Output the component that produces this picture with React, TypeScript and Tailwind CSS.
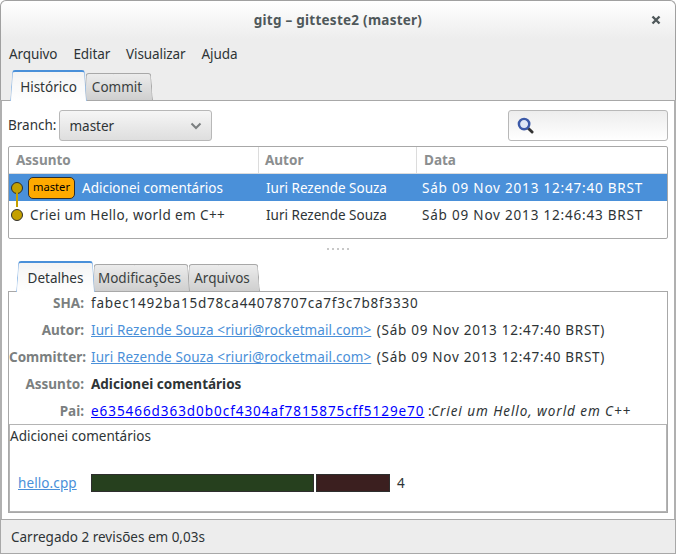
import React from 'react';

const font = { fontFamily: '"Noto Sans", sans-serif' };

// notebook tab: two skewed halves make the slanted sides, label sits on top
const Tab = ({ label, active, width, z }: { label: string; active?: boolean; width: string; z: string }) => {
  const face = active
    ? 'border-x border-t-2 border-x-[#9cc0e8] border-t-[#4a90d9] bg-gradient-to-b from-[#f4f4f4] to-white'
    : 'border-x border-t border-[#a8a8a8] bg-gradient-to-b from-[#ececec] to-[#cfcfcf]';
  return (
    <div
      className={`relative flex items-center justify-center ${width} ${z} ${
        active ? '-mb-px h-[31px] pt-[3px]' : '-ml-[3px] h-[27px] pr-[3px] pt-[1px] text-[#3a3f40]'
      }`}
    >
      <div className={`absolute bottom-0 left-0 top-0 w-[55%] origin-bottom -skew-x-[4deg] rounded-tl-[3px] border-r-0 ${face}`} />
      <div className={`absolute bottom-0 left-[45%] right-0 top-0 origin-bottom skew-x-[4deg] rounded-tr-[3px] border-l-0 ${face}`} />
      <span className="relative">{label}</span>
    </div>
  );
};

const Node = () => <div className="h-[12px] w-[12px] rounded-full border border-[#2e2e2e] bg-[#c4a000]" />;

const DetailRow = ({ label, children }: { label: string; children: React.ReactNode }) => (
  <div className="flex h-[27px] items-center pb-[4px]">
    <div className="w-[76px] pr-[1px] text-right font-bold text-[#7b7f80]">{label}</div>
    <div className="ml-[6px] whitespace-nowrap">{children}</div>
  </div>
);

const link = 'text-[#4a90d9] underline tracking-[0.1px]';

export default function App() {
  return (
    <div style={font} className="flex h-[554px] w-[676px] flex-col overflow-hidden bg-white text-[13.5px] text-[#2e3436]">
      {/* title bar and menu */}
      <div className="h-[100px] shrink-0 rounded-t-[6px] border border-b-0 border-[#a0a0a0] bg-[#ededed]">
        <div className="relative flex h-[38px] items-center justify-center rounded-t-[6px] bg-gradient-to-b from-white to-[#ededed] font-bold tracking-[0.25px] text-[#4f585a]">
          gitg – gitteste2 (master)
          <svg viewBox="0 0 10 10" className="absolute right-[14px] top-[14px] h-[10px] w-[10px]">
            <path d="M1.5 1.5 L8.5 8.5 M8.5 1.5 L1.5 8.5" stroke="#4f585a" strokeWidth="2.4" />
          </svg>
        </div>
        <div className="flex h-[30px] items-center gap-[16px] pl-[8px] tracking-[-0.1px]">
          <span>Arquivo</span>
          <span>Editar</span>
          <span>Visualizar</span>
          <span>Ajuda</span>
        </div>
        <div className="flex h-[31px] items-end pl-[9px]">
          <Tab label="Histórico" active width="w-[77px]" z="z-30" />
          <Tab label="Commit" width="w-[69px]" z="z-20" />
        </div>
      </div>

      {/* main content */}
      <div className="flex min-h-0 flex-1 flex-col border-x-2 border-t border-[#a8a8a8] border-x-[#b0b0b0] px-[6px]">
        <div className="mt-[9px] flex h-[31px] items-center justify-between">
          <div className="flex items-center gap-[3px]">
            <span>Branch:</span>
            <div className="flex h-[31px] w-[153px] items-center justify-between rounded-[3px] border border-[#b8b8b8] bg-gradient-to-b from-[#f6f6f6] to-[#dedede] px-[9px]">
              <span className="pt-[2px]">master</span>
              <svg viewBox="0 0 12 8" className="h-[8px] w-[12px]">
                <path d="M1.5 1.5 L6 6 L10.5 1.5" fill="none" stroke="#7b7f80" strokeWidth="2" />
              </svg>
            </div>
          </div>
          <div className="flex h-[31px] w-[160px] items-center rounded-[3px] border border-[#b8b8b8] bg-gradient-to-b from-[#ededed] to-white pl-[8px]">
            <svg viewBox="0 0 18 18" className="h-[17px] w-[17px]">
              <path d="M11 11 L16 16" stroke="#333" strokeWidth="3" strokeLinecap="round" />
              <circle cx="7.5" cy="7.5" r="5.5" fill="#dfe7f5" stroke="#3c5aa8" strokeWidth="2.6" />
            </svg>
          </div>
        </div>

        {/* commit list */}
        <div className="mt-[5px] h-[94px] rounded-[2px] border border-[#a8a8a8]">
          <div className="flex h-[27px] items-center border-b border-[#dcdcdc] font-bold text-[#8b8e8f]">
            <div className="h-full w-[250px] border-r border-[#dcdcdc] pl-[7px] leading-[27px]">Assunto</div>
            <div className="h-full w-[158px] border-r border-[#dcdcdc] pl-[6px] leading-[27px]">Autor</div>
            <div className="pl-[7px]">Data</div>
          </div>
          <div className="flex h-[27px] items-center bg-[#4a90d9] text-white">
            <div className="flex w-[250px] items-center">
              <div className="ml-[2px]"><Node /></div>
              <div className="ml-[5px] flex h-[22px] w-[47px] items-center justify-center rounded-[5px] border border-[#2e2e2e] bg-[#ffaa00] text-[11.2px] text-black">
                master
              </div>
              <span className="ml-[7px] pt-[2px]">Adicionei comentários</span>
            </div>
            <div className="w-[158px] pl-[7px] pt-[2px]">Iuri Rezende Souza</div>
            <div className="whitespace-nowrap pl-[5px] pt-[2px] tracking-[0.8px]">Sáb 09 Nov 2013 12:47:40 BRST</div>
          </div>
          <div className="relative flex h-[27px] items-center">
            <div className="absolute left-[7px] top-[-12px] h-[18px] w-[2px] bg-[#c4a000]" />
            <div className="relative flex w-[250px] items-center">
              <div className="ml-[2px]"><Node /></div>
              <span className="ml-[7px] pt-[2px] tracking-[0.4px]">Criei um Hello, world em C++</span>
            </div>
            <div className="w-[158px] pl-[7px] pt-[2px]">Iuri Rezende Souza</div>
            <div className="whitespace-nowrap pl-[5px] pt-[2px] tracking-[0.8px]">Sáb 09 Nov 2013 12:46:43 BRST</div>
          </div>
        </div>

        {/* pane grip */}
        <div className="mt-[9px] flex h-[2px] justify-center gap-[3px]">
          {[0, 1, 2, 3, 4].map((i) => (
            <div key={i} className="h-[2px] w-[2px] bg-[#c8c8c8]" />
          ))}
        </div>

        {/* lower notebook */}
        <div className="mt-[11px] flex h-[30px] items-end pl-[8px]">
          <Tab label="Detalhes" active width="w-[79px]" z="z-30" />
          <Tab label="Modificações" width="w-[98px]" z="z-20" />
          <Tab label="Arquivos" width="w-[73px]" z="z-10" />
        </div>
        <div className="h-[222px] border border-[#a8a8a8]">
          <div className="h-[132px]">
            <DetailRow label="SHA:">
              <span className="tracking-[0.78px]">fabec1492ba15d78ca44078707ca7f3c7b8f3330</span>
            </DetailRow>
            <DetailRow label="Autor:">
              <span className={link}>Iuri Rezende Souza &lt;riuri@rocketmail.com&gt;</span>{' '}
              <span className="ml-[2px] tracking-[0.72px]">(Sáb 09 Nov 2013 12:47:40 BRST)</span>
            </DetailRow>
            <DetailRow label="Committer:">
              <span className={link}>Iuri Rezende Souza &lt;riuri@rocketmail.com&gt;</span>{' '}
              <span className="ml-[2px] tracking-[0.72px]">(Sáb 09 Nov 2013 12:47:40 BRST)</span>
            </DetailRow>
            <DetailRow label="Assunto:">
              <span className="font-bold">Adicionei comentários</span>
            </DetailRow>
            <DetailRow label="Pai:">
              <span className="tracking-[0.95px] text-[#0000ff] underline">e635466d363d0b0cf4304af7815875cff5129e70</span> :{' '}
              <em className="-ml-[4px] tracking-[0.93px]">Criei um Hello, world em C++</em>
            </DetailRow>
          </div>
          <div className="h-[88px] border border-[#b4b4b4]">
            <div className="h-[21px] pt-[1px] leading-[21px]">Adicionei comentários</div>
            <div className="mt-[27px] flex items-center">
              <span className={`${link} ml-[8px] w-[73px]`}>hello.cpp</span>
              <div className="h-[18px] w-[223px] border border-[#2e2e2e] bg-[#26401e]" />
              <div className="ml-[2px] h-[18px] w-[74px] border border-[#2e2e2e] bg-[#3b1f1f]" />
              <span className="ml-[7px]">4</span>
            </div>
          </div>
        </div>
        <div className="h-[6px]" />
      </div>

      {/* status bar */}
      <div className="flex h-[35px] shrink-0 items-center border border-[#a8a8a8] bg-[#ededed] pl-[10px] pt-[2px]">
        Carregado 2 revisões em 0,03s
      </div>
    </div>
  );
}
